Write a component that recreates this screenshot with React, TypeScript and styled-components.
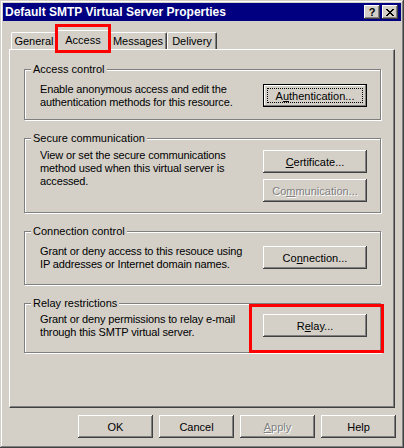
import React from "react";
import styled, { createGlobalStyle, css } from "styled-components";

const FACE = "#d4d0c8";

const GlobalStyle = createGlobalStyle`
  html, body {
    margin: 0;
    padding: 0;
    background: ${FACE};
  }
  body {
    font-family: "Liberation Sans", Arial, sans-serif;
    font-size: 11px;
    color: #000;
  }
`;

const Window = styled.div`
  position: relative;
  width: 404px;
  height: 448px;
  box-sizing: border-box;
  padding: 3px;
  background: ${FACE};
  box-shadow: inset -1px -1px #404040, inset 1px 1px ${FACE},
    inset -2px -2px #808080, inset 2px 2px #fff;
  display: flex;
  flex-direction: column;
`;

const TitleBar = styled.div`
  height: 18px;
  background: #000080;
  display: flex;
  align-items: center;
  padding: 0 3px 0 2px;
`;

const Title = styled.div`
  flex: 1;
  color: #fff;
  font-weight: bold;
  font-size: 12px;
  white-space: nowrap;
`;

const CaptionButton = styled.div`
  width: 16px;
  height: 14px;
  box-sizing: border-box;
  margin-left: 2px;
  background: ${FACE};
  box-shadow: inset -1px -1px #404040, inset 1px 1px #fff,
    inset -2px -2px #808080, inset 2px 2px ${FACE};
  display: flex;
  align-items: center;
  justify-content: center;
  font-weight: bold;
  font-size: 11px;
  line-height: 14px;
`;

const Body = styled.div`
  flex: 1;
  display: flex;
  flex-direction: column;
  padding: 9px 6px 0 6px;
`;

const TabStrip = styled.div`
  display: flex;
  align-items: flex-end;
  height: 19px;
  padding-left: 2px;
  position: relative;
  z-index: 1;
`;

const Tab = styled.div<{ $w: number; $active?: boolean }>`
  box-sizing: border-box;
  width: ${(p) => p.$w}px;
  height: 17px;
  background: ${FACE};
  border-top: 1px solid #fff;
  border-left: 1px solid #fff;
  border-right: 1px solid #404040;
  border-radius: 2px 2px 0 0;
  box-shadow: inset -1px 0 #808080;
  display: flex;
  align-items: center;
  justify-content: center;
  white-space: nowrap;
  ${(p) =>
    p.$active &&
    css`
      width: ${p.$w + 4}px;
      height: 20px;
      margin: 0 -2px -1px;
      padding-bottom: 2px;
      position: relative;
      z-index: 2;
    `}
`;

const Panel = styled.div`
  box-sizing: border-box;
  height: 359px;
  border-top: 1px solid #fff;
  border-left: 1px solid #fff;
  border-right: 1px solid #404040;
  border-bottom: 1px solid #404040;
  box-shadow: inset -1px -1px #808080;
  padding: 19px 13px 0 14px;
  display: flex;
  flex-direction: column;
  gap: 18px;
`;

const Group = styled.div<{ $h: number; $top: number }>`
  position: relative;
  box-sizing: border-box;
  height: ${(p) => p.$h}px;
  border: 1px solid #808080;
  box-shadow: 1px 1px 0 #fff, inset 1px 1px 0 #fff;
  padding: ${(p) => p.$top}px 13px 0 15px;
  display: grid;
  grid-template-columns: 1fr 104px;
  align-items: start;
`;

const Legend = styled.div`
  position: absolute;
  top: -7px;
  left: 6px;
  padding: 0 2px;
  line-height: 13px;
  background: ${FACE};
  white-space: nowrap;
`;

const Description = styled.div`
  line-height: 13px;
  margin-top: -1px;
  letter-spacing: -0.15px;
  white-space: nowrap;
`;

const ButtonStack = styled.div`
  display: flex;
  flex-direction: column;
  gap: 6px;
`;

const Button = styled.div<{ $w?: number; $default?: boolean; $disabled?: boolean }>`
  box-sizing: border-box;
  width: ${(p) => (p.$w ? `${p.$w}px` : "100%")};
  height: 23px;
  background: ${FACE};
  box-shadow: inset -1px -1px #404040, inset 1px 1px #fff,
    inset -2px -2px #808080, inset 2px 2px ${FACE};
  display: flex;
  align-items: center;
  justify-content: center;
  white-space: nowrap;
  color: #000;
  ${(p) =>
    p.$default &&
    css`
      box-shadow: inset 0 0 0 1px #000, inset -2px -2px #808080,
        inset 2px 2px #fff;
    `}
  ${(p) =>
    p.$disabled &&
    css`
      color: #808080;
      text-shadow: 1px 1px 0 #fff;
    `}
`;

const FocusRing = styled.span`
  box-sizing: border-box;
  position: absolute;
  inset: 4px;
  border: 1px dotted #000;
  pointer-events: none;
`;

const DefaultWrap = styled.div`
  position: relative;
`;

const Key = styled.span`
  text-decoration: underline;
`;

const ButtonRow = styled.div`
  display: flex;
  justify-content: flex-end;
  gap: 6px;
  margin-top: 7px;
  margin-right: -1px;
`;

const Highlight = styled.div<{ $x: number; $y: number; $w: number; $h: number }>`
  position: absolute;
  left: ${(p) => p.$x}px;
  top: ${(p) => p.$y}px;
  width: ${(p) => p.$w}px;
  height: ${(p) => p.$h}px;
  box-sizing: border-box;
  border: 3px solid #ff0000;
  z-index: 5;
  pointer-events: none;
`;

const CloseGlyph = () => (
  <svg width="8" height="7" viewBox="0 0 8 7" shapeRendering="crispEdges">
    <path
      d="M0 0h2v1h1v1h2V1h1V0h2v1H7v1H6v1H5v1h1v1h1v1h1v1H6V6H5V5H3v1H2v1H0V6h1V5h1V4h1V3H2V2H1V1H0z"
      fill="#000"
    />
  </svg>
);

const tabs = [
  { label: "General", w: 46 },
  { label: "Access", w: 52, active: true },
  { label: "Messages", w: 58 },
  { label: "Delivery", w: 50 },
];

const App: React.FC = () => {
  return (
    <Window>
      <GlobalStyle />
      <TitleBar>
        <Title>Default SMTP Virtual Server Properties</Title>
        <CaptionButton>?</CaptionButton>
        <CaptionButton>
          <CloseGlyph />
        </CaptionButton>
      </TitleBar>
      <Body>
        <TabStrip>
          {tabs.map((t) => (
            <Tab key={t.label} $w={t.w} $active={t.active}>
              {t.label}
            </Tab>
          ))}
        </TabStrip>
        <Panel>
          <Group $h={51} $top={14}>
            <Legend>Access control</Legend>
            <Description>
              Enable anonymous access and edit the
              <br />
              authentication methods for this resource.
            </Description>
            <DefaultWrap>
              <Button $default>
                A<Key>u</Key>thentication...
              </Button>
              <FocusRing />
            </DefaultWrap>
          </Group>
          <Group $h={75} $top={11}>
            <Legend>Secure communication</Legend>
            <Description>
              View or set the secure communications
              <br />
              method used when this virtual server is
              <br />
              accessed.
            </Description>
            <ButtonStack>
              <Button>
                <Key>C</Key>ertificate...
              </Button>
              <Button $disabled>
                Co<Key>m</Key>munication...
              </Button>
            </ButtonStack>
          </Group>
          <Group $h={54} $top={14}>
            <Legend>Connection control</Legend>
            <Description>
              Grant or deny access to this resouce using
              <br />
              IP addresses or Internet domain names.
            </Description>
            <Button>
              Co<Key>n</Key>nection...
            </Button>
          </Group>
          <Group $h={50} $top={10}>
            <Legend>Relay restrictions</Legend>
            <Description>
              Grant or deny permissions to relay e-mail
              <br />
              through this SMTP virtual server.
            </Description>
            <Button>
              R<Key>e</Key>lay...
            </Button>
          </Group>
        </Panel>
        <ButtonRow>
          <Button $w={75}>OK</Button>
          <Button $w={75}>Cancel</Button>
          <Button $w={75} $disabled>
            <Key>A</Key>pply
          </Button>
          <Button $w={75}>Help</Button>
        </ButtonRow>
      </Body>
      <Highlight $x={55} $y={24} $w={56} $h={29} />
      <Highlight $x={249} $y={304} $w={135} $h={49} />
    </Window>
  );
};

export default App;
